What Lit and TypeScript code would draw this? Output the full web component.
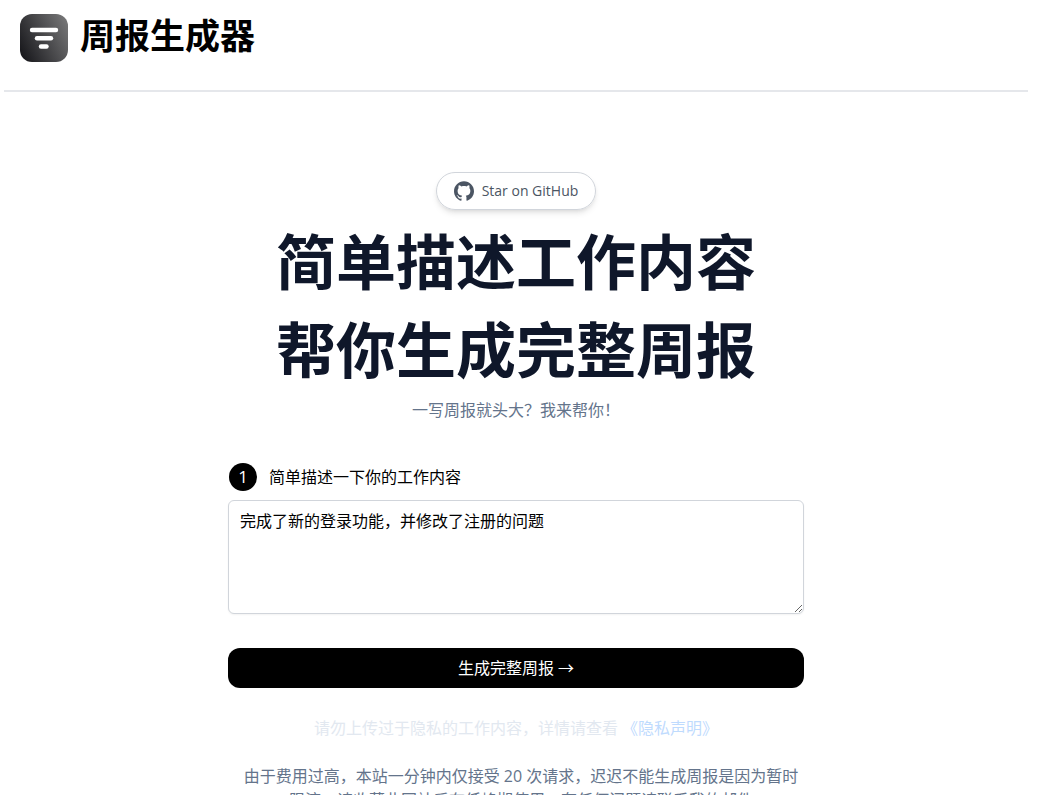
import { LitElement, html, css } from "lit";
import { customElement, state } from "lit/decorators.js";

@customElement("app-root")
export class AppRoot extends LitElement {
  static styles = css`
    :host {
      display: block;
      height: 100vh;
      overflow: hidden;
      background: #fff;
      color: #000;
      font-family: "Open Sans", "Noto Sans CJK SC", sans-serif;
      font-size: 16px;
      line-height: 24px;
    }
    * { box-sizing: border-box; margin: 0; }
    .page {
      padding-right: 13px;
      display: flex;
      flex-direction: column;
      align-items: center;
    }
    header {
      width: 100%;
      max-width: 1024px;
      padding: 14px 16px 28px;
      border-bottom: 2px solid #e5e7eb;
      display: flex;
    }
    .brand {
      display: flex;
      align-items: center;
      gap: 12px;
      color: inherit;
      text-decoration: none;
    }
    .brand svg { display: block; }
    .brand-name {
      font-size: 35px;
      line-height: 40px;
      font-weight: 700;
      padding-bottom: 4px;
    }
    main {
      width: 100%;
      max-width: 1024px;
      padding: 80px 16px 0;
      display: flex;
      flex-direction: column;
      align-items: center;
      text-align: center;
    }
    .star {
      display: flex;
      align-items: center;
      gap: 8px;
      height: 38px;
      padding: 0 17px;
      border: 1px solid #d1d5db;
      border-radius: 19px;
      box-shadow: 0 4px 6px -1px rgb(0 0 0 / 0.1), 0 2px 4px -2px rgb(0 0 0 / 0.1);
      color: #4b5563;
      font-size: 14px;
      line-height: 20px;
      text-decoration: none;
    }
    h1 {
      margin-top: 8px;
      color: #0f172a;
      font-size: 60px;
      line-height: 88px;
      font-weight: 700;
    }
    .tagline { margin-top: 4px; color: #64748b; }
    form {
      width: 100%;
      max-width: 576px;
      margin-top: 40px;
      display: flex;
      flex-direction: column;
    }
    .step { display: flex; align-items: center; gap: 11px; height: 30px; }
    .badge { display: block; }
    .badge text { font-family: "Open Sans", sans-serif; font-size: 17px; }
    textarea {
      display: block;
      width: 100%;
      height: 114px;
      margin-top: 8px;
      padding: 8px 11px;
      border: 1px solid #d1d5db;
      border-radius: 6px;
      box-shadow: 0 1px 2px rgb(0 0 0 / 0.05);
      background: #fff;
      color: #000;
      font: inherit;
      resize: vertical;
    }
    button {
      height: 40px;
      margin-top: 34px;
      border: 0;
      border-radius: 12px;
      background: #000;
      color: #fff;
      font: inherit;
    }
    .privacy { margin-top: 28px; color: #e2e8f0; }
    .privacy a { color: #bfdbfe; text-decoration: none; }
    .notice { max-width: 576px; margin-top: 24px; padding: 0 3px 0 13px; color: #64748b; }
  `;

  @state() private work = "完成了新的登录功能，并修改了注册的问题";

  render() {
    return html`
      <div class="page">
        <header>
          <a class="brand" href="#">
            <svg width="48" height="48" viewBox="0 0 48 48" aria-hidden="true">
              <defs>
                <linearGradient id="shade" x1="0" y1="0.75" x2="1" y2="0.25">
                  <stop offset="0" stop-color="#1a1a1e" />
                  <stop offset="1" stop-color="#737374" />
                </linearGradient>
              </defs>
              <rect width="48" height="48" rx="12" fill="url(#shade)" />
              <g stroke="#fff" stroke-width="4.4" stroke-linecap="round">
                <path d="M12 16H36" />
                <path d="M17 24.2H31" />
                <path d="M21 32.5H26.5" />
              </g>
            </svg>
            <span class="brand-name">周报生成器</span>
          </a>
        </header>
        <main>
          <a class="star" href="#">
            <svg width="20" height="20" viewBox="0 0 24 24" fill="currentColor" aria-hidden="true">
              <path d="M12 .297c-6.63 0-12 5.373-12 12 0 5.303 3.438 9.8 8.205 11.385.6.113.82-.258.82-.577 0-.285-.01-1.04-.015-2.04-3.338.724-4.042-1.61-4.042-1.61C4.422 18.07 3.633 17.7 3.633 17.7c-1.087-.744.084-.729.084-.729 1.205.084 1.838 1.236 1.838 1.236 1.07 1.835 2.809 1.305 3.495.998.108-.776.417-1.305.76-1.605-2.665-.3-5.466-1.332-5.466-5.93 0-1.31.465-2.38 1.235-3.22-.135-.303-.54-1.523.105-3.176 0 0 1.005-.322 3.3 1.23.96-.267 1.98-.399 3-.405 1.02.006 2.04.138 3 .405 2.28-1.552 3.285-1.23 3.285-1.23.645 1.653.24 2.873.12 3.176.765.84 1.23 1.91 1.23 3.22 0 4.61-2.805 5.625-5.475 5.92.42.36.81 1.096.81 2.22 0 1.606-.015 2.896-.015 3.286 0 .315.21.69.825.57C20.565 22.092 24 17.592 24 12.297c0-6.627-5.373-12-12-12" />
            </svg>
            <span>Star on GitHub</span>
          </a>
          <h1>简单描述工作内容<br />帮你生成完整周报</h1>
          <p class="tagline">一写周报就头大？我来帮你！</p>
          <form @submit=${(e: Event) => e.preventDefault()}>
            <label class="step" for="work">
              <svg class="badge" width="30" height="30" viewBox="0 0 30 30" aria-hidden="true">
                <circle cx="15" cy="15" r="14" fill="#000" />
                <text x="15" y="21" fill="#fff" text-anchor="middle">1</text>
              </svg>
              <span>简单描述一下你的工作内容</span>
            </label>
            <textarea
              id="work"
              .value=${this.work}
              @input=${(e: Event) => (this.work = (e.target as HTMLTextAreaElement).value)}
            ></textarea>
            <button type="submit">生成完整周报 →</button>
          </form>
          <p class="privacy">请勿上传过于隐私的工作内容，详情请查看 <a href="#">《隐私声明》</a></p>
          <p class="notice">
            由于费用过高，本站一分钟内仅接受 20 次请求，迟迟不能生成周报是因为暂时限流，请收藏此网站后在低峰期使用，有任何问题请联系我的邮件
          </p>
        </main>
      </div>
    `;
  }
}
